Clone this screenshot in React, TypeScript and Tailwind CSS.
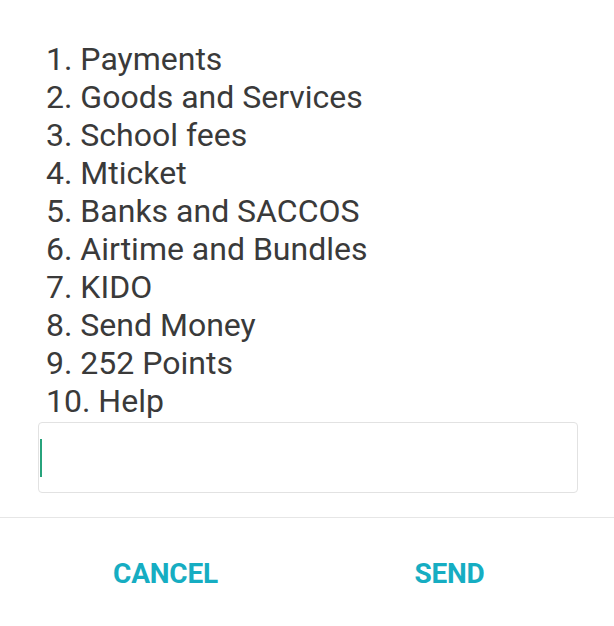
const items = [
  "1. Payments",
  "2. Goods and Services",
  "3. School fees",
  "4. Mticket",
  "5. Banks and SACCOS",
  "6. Airtime and Bundles",
  "7. KIDO",
  "8. Send Money",
  "9. 252 Points",
  "10. Help",
]

export default function App() {
  return (
    <div className="flex h-[626px] w-[614px] flex-col overflow-hidden bg-white font-['Roboto',sans-serif]">
      <div className="flex flex-col px-[46px] pt-[40px]">
        {items.map((item) => (
          <div key={item} className="h-[38px] text-[32px] leading-[38px] text-[#3a3a3a]">
            {item}
          </div>
        ))}
      </div>
      <div className="ml-[38px] mr-[36px] mt-[2px] flex h-[71px] items-center rounded-[4px] border border-[#e2e2e2] px-px">
        <div className="h-[38px] w-[2px] bg-[#27a37c]"></div>
      </div>
      <div className="mt-[24px] border-t border-[#e6e6e6]"></div>
      <div className="flex flex-1 items-start pt-[41px]">
        <div className="flex w-1/2 justify-center pl-[24px]">
          <span className="text-[28px] font-bold leading-[30px] tracking-[-0.2px] text-[#16adc2]">CANCEL</span>
        </div>
        <div className="flex w-1/2 justify-center pr-[22px]">
          <span className="text-[28px] font-bold leading-[30px] tracking-[-0.2px] text-[#16adc2]">SEND</span>
        </div>
      </div>
    </div>
  )
}
